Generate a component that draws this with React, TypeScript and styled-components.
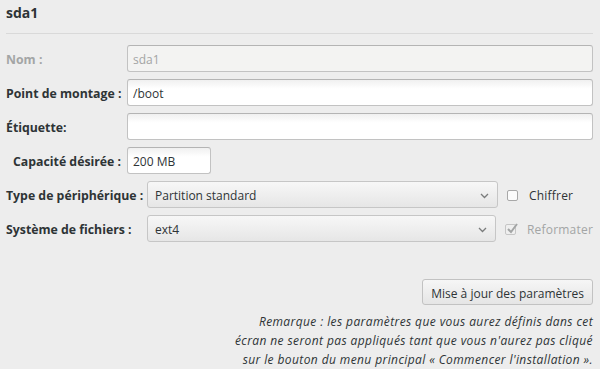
import React, { FunctionComponent } from 'react';
import styled, { createGlobalStyle } from 'styled-components';

const GlobalStyle = createGlobalStyle`
    html, body {
      margin: 0;
      padding: 0;
      background: #ededed;
    }
    body {
      font-family: "Open Sans", "DejaVu Sans", sans-serif;
      font-size: 12px;
      color: #2e3436;
    }
`;

const Page = styled.div`
    width: 600px;
    height: 369px;
    box-sizing: border-box;
    padding: 0 7px 0 6px;
    display: flex;
    flex-direction: column;
`;

const Header = styled.div`
    height: 36px;
    box-sizing: border-box;
    border-bottom: 1px solid #d9d9d9;
    padding-top: 3px;
    font-size: 14px;
    font-weight: bold;
    color: #2e3436;
`;

const Form = styled.div`
    display: flex;
    flex-direction: column;
    gap: 7px;
    margin-top: 11px;
`;

const Row = styled.div`
    display: flex;
    align-items: center;
    height: 27px;
`;

const Label = styled.label<{ $width: number; $indent?: number; $disabled?: boolean }>`
    width: ${(p) => p.$width}px;
    padding-left: ${(p) => p.$indent || 0}px;
    padding-top: 2px;
    box-sizing: border-box;
    flex: none;
    font-weight: bold;
    font-size: 12.3px;
    white-space: nowrap;
    color: ${(p) => (p.$disabled ? '#a3a5a5' : '#2e3436')};
`;

const TextField = styled.input<{ $width?: number }>`
    ${(p) => (p.$width ? `width: ${p.$width}px; flex: none;` : 'flex: 1;')}
    height: 27px;
    box-sizing: border-box;
    border: 1px solid #c2c2c2;
    border-top-color: #b4b4b4;
    border-radius: 3px;
    background: linear-gradient(#f0f0f0, #ffffff 35%);
    font-family: inherit;
    font-size: 12px;
    color: #2e3436;
    padding: 2px 5px 0;
    outline: none;
    &:disabled {
      background: #f3f3f2;
      color: #a3a5a5;
    }
`;

const Combo = styled.div`
    width: 351px;
    height: 27px;
    box-sizing: border-box;
    border: 1px solid #c6c6c6;
    border-radius: 3px;
    background: linear-gradient(#f7f7f7, #e6e6e6);
    display: flex;
    align-items: center;
    padding: 2px 8px 0 7px;
    font-size: 12px;
    color: #2e3436;
`;

const ComboText = styled.span`
    flex: 1;
`;

const Check = styled.div<{ $disabled?: boolean }>`
    display: flex;
    align-items: center;
    gap: 11px;
    margin-left: 9px;
    padding-top: 2px;
    font-size: 12px;
    letter-spacing: 0.2px;
    color: ${(p) => (p.$disabled ? '#a3a5a5' : '#2e3436')};
`;

const Box = styled.span<{ $disabled?: boolean }>`
    width: 11px;
    height: 11px;
    box-sizing: border-box;
    border: 1px solid ${(p) => (p.$disabled ? '#c6c6c6' : '#a8a8a8')};
    border-radius: 2px;
    background: ${(p) => (p.$disabled ? '#efefef' : '#fbfbfb')};
    position: relative;
`;

const Tick = styled.svg`
    position: absolute;
    left: 0;
    top: -3px;
`;

const Footer = styled.div`
    margin-top: 37px;
    display: flex;
    flex-direction: column;
    align-items: flex-end;
`;

const Button = styled.button`
    height: 26px;
    padding: 2px 8px 0;
    border: 1px solid #c2c2c2;
    border-radius: 3px;
    background: linear-gradient(#f6f6f6, #e5e5e5);
    font-family: inherit;
    font-size: 12px;
    color: #2e3436;
`;

const Note = styled.p`
    margin: 7px 0 0;
    font-style: italic;
    font-size: 12px;
    letter-spacing: 0.4px;
    line-height: 19px;
    text-align: right;
    white-space: nowrap;
    color: #2e3436;
`;

const Chevron: FunctionComponent = () => (
  <svg width="9" height="6" viewBox="0 0 9 6">
    <path d="M1 1 L4.5 4.5 L8 1" fill="none" stroke="#7a7c7c" strokeWidth="1.3" />
  </svg>
);

const Checkbox: FunctionComponent<{ label: string; checked?: boolean; disabled?: boolean }> = ({
  label, checked, disabled,
}) => (
  <Check $disabled={disabled}>
    <Box $disabled={disabled}>
      {checked && (
        <Tick width="12" height="13" viewBox="0 0 12 13">
          <path d="M2 7 L5 10 L11 2" fill="none" stroke="#a3a5a5" strokeWidth="2" />
        </Tick>
      )}
    </Box>
    {label}
  </Check>
);

const App: FunctionComponent = () => (
  <>
    <GlobalStyle />
    <Page>
      <Header>sda1</Header>
      <Form>
        <Row>
          <Label $width={121} $disabled>Nom :</Label>
          <TextField value="sda1" disabled readOnly />
        </Row>
        <Row>
          <Label $width={121}>Point de montage :</Label>
          <TextField value="/boot" readOnly />
        </Row>
        <Row>
          <Label $width={121}>Étiquette:</Label>
          <TextField value="" readOnly />
        </Row>
        <Row>
          <Label $width={121} $indent={7}>Capacité désirée :</Label>
          <TextField $width={84} value="200 MB" readOnly />
        </Row>
        <Row>
          <Label $width={141}>Type de périphérique :</Label>
          <Combo>
            <ComboText>Partition standard</ComboText>
            <Chevron />
          </Combo>
          <Checkbox label="Chiffrer" />
        </Row>
        <Row>
          <Label $width={141}>Système de fichiers :</Label>
          <Combo>
            <ComboText>ext4</ComboText>
            <Chevron />
          </Combo>
          <Checkbox label="Reformater" checked disabled />
        </Row>
      </Form>
      <Footer>
        <Button>Mise à jour des paramètres</Button>
        <Note>
          Remarque : les paramètres que vous aurez définis dans cet
          <br />
          écran ne seront pas appliqués tant que vous n&apos;aurez pas cliqué
          <br />
          sur le bouton du menu principal « Commencer l&apos;installation ».
        </Note>
      </Footer>
    </Page>
  </>
);

export default App;
